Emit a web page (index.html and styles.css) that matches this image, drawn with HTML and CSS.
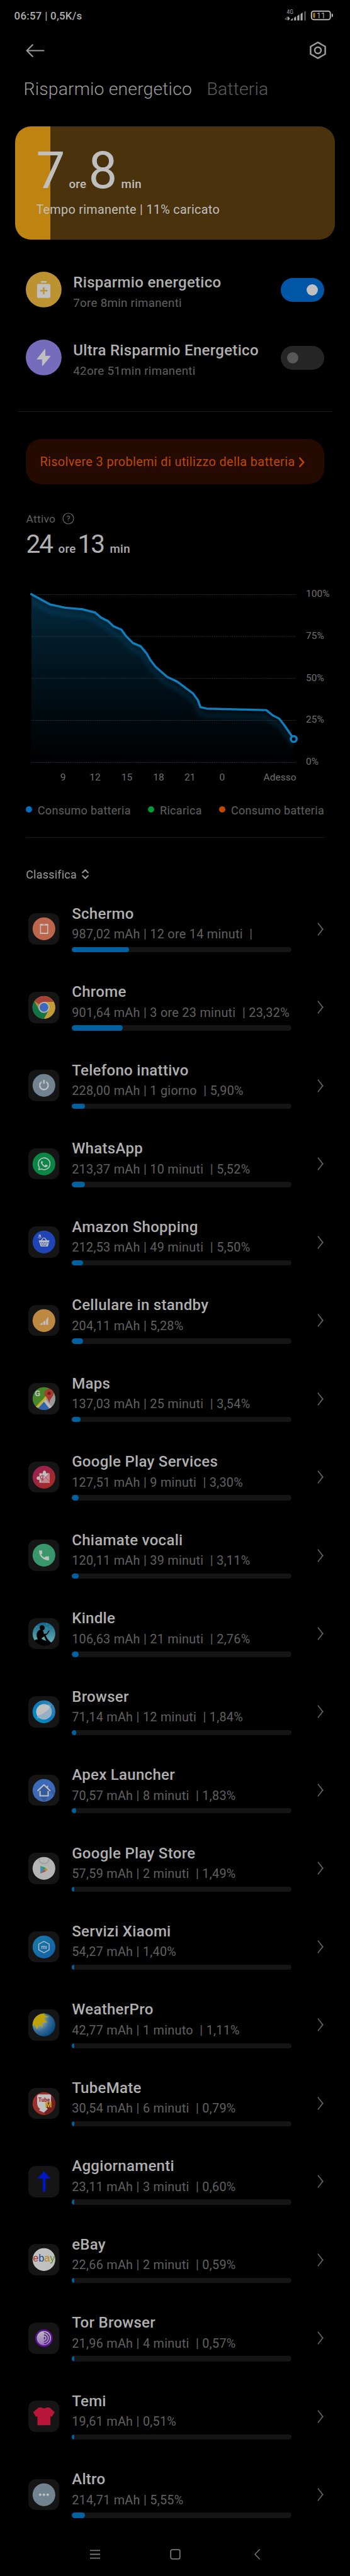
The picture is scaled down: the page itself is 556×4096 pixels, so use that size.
FILE: index.html
```html
<!DOCTYPE html>
<html lang="it">
<head>
  <meta charset="UTF-8">
  <title>Risparmio energetico</title>
  <link rel="stylesheet" href="styles.css">
</head>
<body>

<!-- Status bar -->
<div class="status">
  <span class="clock">06:57 | 0,5K/s</span>
  <svg class="status-icons" width="80" height="24" viewBox="0 0 155 46">
    <text x="7" y="15" font-size="16" fill="#a8a8a8">4G</text>
    <path d="M0 31l6-5v-4h1v13H6z" fill="#555"/>
    <path d="M9 24h3l4 5v3h-3v3h-4z" fill="#a8a8a8"/>
    <path d="M19 35l6-6v6zM30 35V28l5-4v11zM40 35V22l5-4v17zM50 35V16l5-4v23z" fill="#b0b0b0" stroke="#b0b0b0" stroke-linejoin="round"/>
    <path d="M60 35.500V9l6-3v29.500z" fill="#4a4a4a"/>
    <rect x="83" y="7" width="58" height="26" rx="7" fill="none" stroke="#b0b0b0" stroke-width="4"/>
    <rect x="88" y="12" width="6" height="16" rx="2" fill="#b07818"/>
    <text x="99" y="29" font-size="24" fill="#b0b0b0">11</text>
    <rect x="145" y="15" width="4" height="10" rx="2" fill="#b0b0b0"/>
  </svg>
</div>

<div class="appbar">
  <svg width="30" height="21" viewBox="0 0 30 21" fill="none" stroke="#9a9a9a" stroke-width="2.2" stroke-linecap="round" stroke-linejoin="round"><path d="M28.5 10.5H1.8M10.8 1.3L1.6 10.5L10.8 19.7"/></svg>
  <svg width="28" height="30" viewBox="0 0 28 30" fill="none" stroke="#9a9a9a" stroke-width="2.5" stroke-linejoin="round"><path d="M14 2.4L25.6 9V21L14 27.6L2.4 21V9z"/><circle cx="14" cy="15" r="5"/></svg>
</div>

<div class="tabs">
  <span class="tab active">Risparmio energetico</span>
  <span class="tab">Batteria</span>
</div>

<!-- Charge card -->
<div class="card">
  <div class="time"><span class="num">7</span><span class="unit">ore</span><span class="num">8</span><span class="unit">min</span></div>
  <div class="card-text">Tempo rimanente | 11% caricato</div>
</div>

<div class="modes">
  <div class="mode">
    <svg class="mode-icon" viewBox="0 0 110 110"><circle cx="55" cy="55" r="55" fill="#bd9230"/><rect x="46" y="29" width="18" height="5" rx="2" fill="#c0c0c0"/><rect x="34.5" y="38" width="41" height="43" rx="4" fill="#c0c0c0"/><path d="M55 48v21M44 58.500h22" stroke="#bd9230" stroke-width="5"/></svg>
    <div class="mode-text">
      <div class="mode-title">Risparmio energetico</div>
      <div class="mode-sub">7ore 8min rimanenti</div>
    </div>
    <div class="toggle on"><i></i></div>
  </div>
  <div class="mode">
    <svg class="mode-icon" viewBox="0 0 110 110"><circle cx="55" cy="55" r="55" fill="#766cbc"/><path d="M59 30L35 60H51V80L75 51H59z" fill="#c0c0c0" stroke="#c0c0c0" stroke-width="2" stroke-linejoin="round"/></svg>
    <div class="mode-text">
      <div class="mode-title">Ultra Risparmio Energetico</div>
      <div class="mode-sub">42ore 51min rimanenti</div>
    </div>
    <div class="toggle"><i></i></div>
  </div>
</div>

<div class="alert">
  <span>Risolvere 3 problemi di utilizzo della batteria</span>
  <svg width="9" height="16" viewBox="0 0 9 16" fill="none" stroke="#c04800" stroke-width="2.6" stroke-linecap="round" stroke-linejoin="round"><path d="M1.4 1.5L7.2 8L1.4 14.500"/></svg>
</div>

<!-- Battery usage -->
<div class="usage">
  <div class="usage-label"><span>Attivo</span>
    <svg width="19" height="19" viewBox="0 0 19 19"><circle cx="9.500" cy="9.500" r="8.500" fill="none" stroke="#6a6a6a" stroke-width="1.200"/><text x="9.500" y="14" text-anchor="middle" font-size="12.500" fill="#6a6a6a">?</text></svg>
  </div>
  <div class="time small"><span class="num">24</span><span class="unit">ore</span><span class="num">13</span><span class="unit">min</span></div>
</div>

<svg class="chart" width="556" height="326" viewBox="0 0 556 326">
  <defs>
    <linearGradient id="area" x1="0" y1="0" x2="0" y2="1">
      <stop offset="0" stop-color="#04293d"/>
      <stop offset=".5" stop-color="#00121b"/>
      <stop offset="1" stop-color="#000"/>
    </linearGradient>
    <filter id="soft" x="-10%" y="-10%" width="120%" height="120%"><feGaussianBlur stdDeviation="3"/></filter>
    <clipPath id="under"><path d="M50 15L79.800 31.200L103.900 36.400L131.200 38.800L151.100 44L161 52.400L171.600 57.600L180.500 65.900L192.900 71.200L200.700 81.900L211 92.400L223.400 97.600L232.600 108.700L239 119.500L247.200 130.300L265.600 146.300L281.500 153.900L306.700 172.700L314.500 183.500L318.400 194.300L328.300 196.700L423 199.100L433.300 207.500L443.600 212.700L452.100 223.800L466.300 245V282.600H50z"/></clipPath>
  </defs>
  <g clip-path="url(#under)">
    <rect x="50" y="15" width="417" height="268" fill="url(#area)"/>
    <path transform="translate(0 11)" filter="url(#soft)" opacity=".16" fill="none" stroke="#0e80bd" stroke-width="8" d="M49.600 14.800L79.800 31.200L103.900 36.400L131.200 38.800L151.100 44L161 52.400L171.600 57.600L180.500 65.900L192.900 71.200L200.700 81.900L211 92.400L223.400 97.600L232.600 108.700L239 119.500L247.200 130.300L265.600 146.300L281.500 153.900L306.700 172.700L314.500 183.500L318.400 194.300L328.300 196.700L423 199.100L433.300 207.500L443.600 212.700L452.100 223.800L466.300 245"/>
  </g>
  <path d="M50 15.500H470.500M50 82H470.500M50 148.800H470.500M50 215.500H470.500M50 282.500H470.500" stroke="#3a4044" stroke-width=".8" stroke-dasharray="1.700 1.200"/>
  <path fill="none" stroke="#0e80bd" stroke-width="3.400" stroke-linecap="round" stroke-linejoin="round" d="M49.600 14.800L79.800 31.200L103.900 36.400L131.200 38.800L151.100 44L161 52.400L171.600 57.600L180.500 65.900L192.900 71.200L200.700 81.900L211 92.400L223.400 97.600L232.600 108.700L239 119.500L247.200 130.300L265.600 146.300L281.500 153.900L306.700 172.700L314.500 183.500L318.400 194.300L328.300 196.700L423 199.100L433.300 207.500L443.600 212.700L452.100 223.800L463.100 239.800"/>
  <circle cx="466.600" cy="245" r="4.600" fill="#000" stroke="#0e80bd" stroke-width="3.500"/>
  <g class="axis">
    <text x="486" y="19">100%</text><text x="486" y="85.700">75%</text><text x="486" y="152.500">50%</text><text x="486" y="219.200">25%</text><text x="486" y="286">0%</text>
    <g text-anchor="middle"><text x="100" y="310.700">9</text><text x="151" y="310.700">12</text><text x="201.400" y="310.700">15</text><text x="252" y="310.700">18</text><text x="301.800" y="310.700">21</text><text x="352.800" y="310.700">0</text></g>
    <text x="470.500" y="310.700" text-anchor="end">Adesso</text>
  </g>
</svg>

<div class="legend">
  <span class="key blue">Consumo batteria</span>
  <span class="key green">Ricarica</span>
  <span class="key orange">Consumo batteria</span>
</div>

<div class="sort">Classifica
  <svg width="11" height="16" viewBox="0 0 11 16" fill="none" stroke="#9a9a9a" stroke-width="2" stroke-linecap="round" stroke-linejoin="round"><path d="M1.200 5.500L5.500 1.200L9.800 5.500M1.200 10.500L5.500 14.800L9.800 10.500"/></svg>
</div>

<!-- Apps -->
<ul class="apps">
  <li>
    <svg class="icon" viewBox="0 0 96 96"><circle cx="48" cy="48" r="35" fill="#bd664c"/><rect x="37.500" y="34.500" width="22" height="28" rx="1" fill="none" stroke="#c0c0c0" stroke-width="3"/><path d="M36 34h25v4H36zM36 60h25v4H36z" fill="#c0c0c0"/><path d="M45 35.500h7" stroke="#bd664c" stroke-width="2"/></svg>
    <div class="info"><div class="name">Schermo</div><div class="detail">987,02 mAh | 12 ore 14 minuti&nbsp; |</div><div class="bar"><i style="width:26%"></i></div></div>
  </li>
  <li>
    <svg class="icon" viewBox="0 0 96 96"><circle cx="48" cy="48" r="35" fill="#b08c2a"/><path d="M48 48L18.500 29A35 35 0 0 1 78 31H48z" fill="#a8403a"/><path d="M48 31H78A35 35 0 0 1 48 83L63 56z" fill="#c29c35"/><path d="M18.500 29A35 35 0 0 0 48 83L62 57L34 57z" fill="#137545"/><circle cx="48" cy="48" r="17" fill="#b8b8b8"/><circle cx="48" cy="48" r="13.500" fill="#3b69bd"/></svg>
    <div class="info"><div class="name">Chrome</div><div class="detail">901,64 mAh | 3 ore 23 minuti&nbsp; | 23,32%</div><div class="bar"><i style="width:23%"></i></div></div>
  </li>
  <li>
    <svg class="icon" viewBox="0 0 96 96"><circle cx="48" cy="48" r="35" fill="#70838f"/><path d="M41 37A13 13 0 1 0 55 37" fill="none" stroke="#c0c0c0" stroke-width="4.500"/><path d="M48 31v12" stroke="#c0c0c0" stroke-width="5"/></svg>
    <div class="info"><div class="name">Telefono inattivo</div><div class="detail">228,00 mAh | 1 giorno&nbsp; | 5,90%</div><div class="bar"><i style="width:6%"></i></div></div>
  </li>
  <li>
    <svg class="icon" viewBox="0 0 96 96"><circle cx="48" cy="48" r="35" fill="#0a8646"/><path d="M34 58A18 18 0 1 1 40.500 63.500L32 65.500z" fill="none" stroke="#c0c0c0" stroke-width="3" stroke-linejoin="round"/><path d="M42 38.500c-4 2-4 6-1 10.500c4 6 10 10 14 9c4-1 5-4 4.500-6l-6-2.500l-3 3.500c-3-1-6-4-7.500-7.500l2-2.500l-2-4.500z" fill="#c0c0c0"/></svg>
    <div class="info"><div class="name">WhatsApp</div><div class="detail">213,37 mAh | 10 minuti&nbsp; | 5,52%</div><div class="bar"><i style="width:6%"></i></div></div>
  </li>
  <li>
    <svg class="icon" viewBox="0 0 96 96"><circle cx="48" cy="48" r="35" fill="#2043b5"/><text x="31" y="33" font-size="15" font-weight="700" fill="#c0c0c0">a</text><path d="M29 34Q35 38 41 34" fill="none" stroke="#c0c0c0" stroke-width="1.500"/><path d="M39 44L47 34.500M49 34.500L57 44" fill="none" stroke="#c0c0c0" stroke-width="2.500"/><path d="M32 43h33l-5 19H38z" fill="#c0c0c0"/><path d="M37 49.500h25M39 54h20M41 58.500h16" stroke="#2043b5" stroke-width="2.600" stroke-dasharray="3 2.400"/></svg>
    <div class="info"><div class="name">Amazon Shopping</div><div class="detail">212,53 mAh | 49 minuti&nbsp; | 5,50%</div><div class="bar"><i style="width:5%"></i></div></div>
  </li>
  <li>
    <svg class="icon" viewBox="0 0 96 96"><circle cx="48" cy="48" r="35" fill="#bd883f"/><path d="M35 61v-1.500L44 53.500V61zM46 61V52L52.500 48V61zM54.500 61V46.500L61 36V61z" fill="#c0c0c0"/></svg>
    <div class="info"><div class="name">Cellulare in standby</div><div class="detail">204,11 mAh | 5,28%</div><div class="bar"><i style="width:5%"></i></div></div>
  </li>
  <li>
    <svg class="icon" viewBox="0 0 96 96"><clipPath id="round"><circle cx="48" cy="48" r="35"/></clipPath><g clip-path="url(#round)"><path d="M0 0h96v96H0z" fill="#46852a"/><path d="M48 45L96 10V96H60z" fill="#999"/><path d="M56 40L22 76H31L48 58L66 78H76L54 52z" fill="#b8b8b8"/><path d="M54 40L20 76H28L59 44z" fill="#c4b024"/><path d="M48 58L26 84H68z" fill="#3362b0"/></g><path d="M64 64Q63 53 55 43A14 14 0 1 1 73 43Q65 53 64 64z" fill="#a63a2e"/><circle cx="64" cy="32" r="5" fill="#6b1c17"/><text x="20" y="40" font-size="25" font-weight="700" fill="#c0c0c0">G</text></svg>
    <div class="info"><div class="name">Maps</div><div class="detail">137,03 mAh | 25 minuti&nbsp; | 3,54%</div><div class="bar"><i style="width:4%"></i></div></div>
  </li>
  <li>
    <svg class="icon" viewBox="0 0 96 96"><linearGradient id="gps" x1="0" x2="1" y1="0" y2="1"><stop offset=".1" stop-color="#982055"/><stop offset=".9" stop-color="#a52d22"/></linearGradient><circle cx="48" cy="48" r="35" fill="url(#gps)"/><path d="M34 36H45.500A5 5 0 1 1 53.500 36H65V66H34V54.500A5 5 0 1 1 34 47.500z" fill="#c0c0c0"/><path d="M65 36V66H36z" fill="#c08a90"/><path d="M40 36L65 61M65 36L36 66" stroke="#a83a48" stroke-width="1.200"/><text x="36" y="55" font-size="20" font-weight="500" fill="#a52745">g</text></svg>
    <div class="info"><div class="name">Google Play Services</div><div class="detail">127,51 mAh | 9 minuti&nbsp; | 3,30%</div><div class="bar"><i style="width:3%"></i></div></div>
  </li>
  <li>
    <svg class="icon" viewBox="0 0 96 96"><circle cx="48" cy="48" r="35" fill="#37966a"/><path d="M33 33.500h8.500l2 8l-4 4.500c3 5 6 7.500 9.500 9.500l4.500-3.500h10V64c-13 1.500-31-9-30.500-30.500z" fill="#c0c0c0"/></svg>
    <div class="info"><div class="name">Chiamate vocali</div><div class="detail">120,11 mAh | 39 minuti&nbsp; | 3,11%</div><div class="bar"><i style="width:3%"></i></div></div>
  </li>
  <li>
    <svg class="icon" viewBox="0 0 96 96"><linearGradient id="sky" x1="0" x2="0" y1="0" y2="1"><stop offset="0" stop-color="#12668c"/><stop offset="1" stop-color="#73b8b8"/></linearGradient><circle cx="48" cy="48" r="35" fill="url(#sky)"/><path d="M19 68C26 65 28 66 29 64C22 52 25 40 37 35C32 27 36 20 43 22C50 22 52 31 49 35L44 38C47 42 48 46 48 49L57 47L60 41L65 36L64 42L58 50L53 53C57 61 64 71 72 76A35 35 0 0 1 19 68z" fill="#000"/><path d="M40 62L49 56L55 70L44 66z" fill="#5ba5ad"/><g fill="#9cc"><circle cx="26" cy="26" r="1"/><circle cx="56" cy="30" r="1"/><circle cx="57" cy="18" r="1"/><circle cx="67" cy="25" r=".8"/><circle cx="77" cy="35" r=".8"/></g></svg>
    <div class="info"><div class="name">Kindle</div><div class="detail">106,63 mAh | 21 minuti&nbsp; | 2,76%</div><div class="bar"><i style="width:3%"></i></div></div>
  </li>
  <li>
    <svg class="icon" viewBox="0 0 96 96"><linearGradient id="web" x1="0" x2="1" y1="1" y2="0"><stop offset="0" stop-color="#0098c0"/><stop offset=".5" stop-color="#087abc"/><stop offset="1" stop-color="#4c88b8"/></linearGradient><circle cx="48" cy="48" r="35" fill="url(#web)"/><path d="M26 64L60 26Q70 24 70 29Q68 38 54 51Q34 70 27 69z" fill="#6aa5c8" opacity=".7"/><circle cx="48" cy="48" r="24" fill="#c0c0c0"/><path d="M28 61Q55 52 68 34A24 24 0 0 1 28 61z" fill="#96afc5"/></svg>
    <div class="info"><div class="name">Browser</div><div class="detail">71,14 mAh | 12 minuti&nbsp; | 1,84%</div><div class="bar"><i style="width:2%"></i></div></div>
  </li>
  <li>
    <svg class="icon" viewBox="0 0 96 96"><circle cx="48" cy="48" r="35" fill="#3d6ab8"/><path d="M69 50L61 66L49 83L34 66V52L48 32L60 34L82 55L78 65z" fill="#345a9c"/><path d="M28 50L48 31L68 50M59 40V34M36 50V65H61V50" fill="none" stroke="#c0c0c0" stroke-width="4" stroke-linejoin="round"/></svg>
    <div class="info"><div class="name">Apex Launcher</div><div class="detail">70,57 mAh | 8 minuti&nbsp; | 1,83%</div><div class="bar"><i style="width:2%"></i></div></div>
  </li>
  <li>
    <svg class="icon" viewBox="0 0 96 96"><circle cx="48" cy="48" r="35" fill="#b5b5b5"/><path d="M33 18A15.500 15.500 0 0 0 64 18" fill="none" stroke="#999" stroke-width="2.600"/><path d="M37 40V64L49 52z" fill="#3c8cb5"/><path d="M37 40L54 47L49 52z" fill="#1f9a55"/><path d="M37 64L54 57L49 52z" fill="#b04848"/><path d="M53 47L60 52L53 57L49 52z" fill="#bd8a30"/></svg>
    <div class="info"><div class="name">Google Play Store</div><div class="detail">57,59 mAh | 2 minuti&nbsp; | 1,49%</div><div class="bar"><i style="width:1%"></i></div></div>
  </li>
  <li>
    <svg class="icon" viewBox="0 0 96 96"><linearGradient id="mi" x1="0" x2="1" y1="0" y2="1"><stop offset="0" stop-color="#1a7aa8"/><stop offset="1" stop-color="#1260a5"/></linearGradient><circle cx="48" cy="48" r="35" fill="url(#mi)"/><path d="M48 31L64 39V57L48 66L32 57V39z" fill="none" stroke="#b8c4cc" stroke-width="2.600"/><text x="48" y="53.500" text-anchor="middle" font-size="16" font-weight="500" fill="#b8c4cc">mı</text></svg>
    <div class="info"><div class="name">Servizi Xiaomi</div><div class="detail">54,27 mAh | 1,40%</div><div class="bar"><i style="width:1%"></i></div></div>
  </li>
  <li>
    <svg class="icon" viewBox="0 0 96 96"><radialGradient id="meteo" cx=".25" cy=".3" r=".8"><stop offset=".2" stop-color="#9aaab5"/><stop offset=".6" stop-color="#3a6c98"/><stop offset="1" stop-color="#044a80"/></radialGradient><circle cx="48" cy="48" r="35" fill="url(#meteo)"/><path d="M13 48A35 35 0 0 1 52 13L48 17L64 23L48 27L59 41L43 40L44 57L34 46L26 62L20 48L13 51z" fill="#bda308"/></svg>
    <div class="info"><div class="name">WeatherPro</div><div class="detail">42,77 mAh | 1 minuto&nbsp; | 1,11%</div><div class="bar"><i style="width:1%"></i></div></div>
  </li>
  <li>
    <svg class="icon" viewBox="0 0 96 96"><circle cx="48" cy="48" r="35" fill="#9c2e2c"/><path d="M71 26L80 34A35 35 0 0 1 54 82L45 74z" fill="#742020"/><path d="M27 25Q28 20 33 20H66Q70 20 70 26V44H54V60L60 64L48 76L32 68L37 65Q27 60 27 44z" fill="#c0c0c0"/><text x="31" y="42" font-size="19" font-weight="900" textLength="35" lengthAdjust="spacingAndGlyphs" fill="#9c2e2c">Tube</text><text x="52" y="60" font-size="23" font-weight="900" fill="#c4a230">M</text></svg>
    <div class="info"><div class="name">TubeMate</div><div class="detail">30,54 mAh | 6 minuti&nbsp; | 0,79%</div><div class="bar"><i style="width:1%"></i></div></div>
  </li>
  <li>
    <svg class="icon" viewBox="0 0 96 96"><path d="M48 16L69 39H53V79H44V39H27z" fill="#0018bd"/></svg>
    <div class="info"><div class="name">Aggiornamenti</div><div class="detail">23,11 mAh | 3 minuti&nbsp; | 0,60%</div><div class="bar"><i style="width:1%"></i></div></div>
  </li>
  <li>
    <svg class="icon" viewBox="0 0 96 96"><circle cx="48" cy="48" r="35" fill="#c0c0c0"/><text class="ebay" x="14" y="54" font-size="33" textLength="68" lengthAdjust="spacingAndGlyphs"><tspan fill="#a82e32">e</tspan><tspan fill="#0b4a96">b</tspan><tspan fill="#bd8710">a</tspan><tspan fill="#658a18">y</tspan></text></svg>
    <div class="info"><div class="name">eBay</div><div class="detail">22,66 mAh | 2 minuti&nbsp; | 0,59%</div><div class="bar"><i style="width:1%"></i></div></div>
  </li>
  <li>
    <svg class="icon" viewBox="0 0 96 96"><linearGradient id="tor" x1="0" x2="0" y1="0" y2="1"><stop offset="0" stop-color="#bbb"/><stop offset="1" stop-color="#9a72c0"/></linearGradient><circle cx="48" cy="48" r="27" fill="#5a1290"/><circle cx="48" cy="48" r="22" fill="url(#tor)"/><g fill="none" stroke="#4a1a78" stroke-width="3"><path d="M48 31A17 17 0 0 1 48 65M48 38A10 10 0 0 1 48 58"/></g><path d="M48 44A4 4 0 0 1 48 52z" fill="#4a1a78"/></svg>
    <div class="info"><div class="name">Tor Browser</div><div class="detail">21,96 mAh | 4 minuti&nbsp; | 0,57%</div><div class="bar"><i style="width:1%"></i></div></div>
  </li>
  <li>
    <svg class="icon" viewBox="0 0 96 96"><path d="M15 36L32 21.500H40Q48 27 57 21.500H65L81 36L72 51L68 48V73Q68 76 65 76H31Q28 76 28 73V49L23 50z" fill="#b81638"/></svg>
    <div class="info"><div class="name">Temi</div><div class="detail">19,61 mAh | 0,51%</div><div class="bar"><i style="width:1%"></i></div></div>
  </li>
  <li>
    <svg class="icon" viewBox="0 0 96 96"><circle cx="48" cy="48" r="35" fill="#70838f"/><g fill="#c0c0c0"><circle cx="36.500" cy="48" r="4"/><circle cx="48" cy="48" r="4"/><circle cx="59.500" cy="48" r="4"/></g></svg>
    <div class="info"><div class="name">Altro</div><div class="detail">214,71 mAh | 5,55%</div><div class="bar"><i style="width:6%"></i></div></div>
  </li>
</ul>

<!-- System navigation -->
<div class="nav">
  <svg width="16" height="17" viewBox="0 0 16 17" stroke="#777" stroke-width="1.800"><path d="M0 2.300H16M0 8.500H16M0 14.700H16"/></svg>
  <svg width="17" height="17" viewBox="0 0 17 17"><rect x="1.200" y="1.200" width="14.600" height="14.600" rx="2.500" fill="none" stroke="#777" stroke-width="1.800"/></svg>
  <svg class="nav-back" width="9" height="17" viewBox="0 0 9 17" fill="none" stroke="#777" stroke-width="1.500" stroke-linecap="round"><path d="M8.300 1L1 8.500L8.300 16"/></svg>
</div>

</body>
</html>
```
FILE: styles.css
```css
* {
  box-sizing: border-box;
}
body {
  margin: 0;
  width: 556px;
  height: 4096px;
  overflow: hidden;
  background: #000;
  color: #b0b0b0;
  font-family: Roboto, sans-serif;
  letter-spacing: .019em;
}
svg {
  display: block;
  flex: none;
  letter-spacing: 0;
}
.status {
  display: flex;
  justify-content: space-between;
  height: 48px;
  padding: 12.3px 24px 0 22.6px;
}
.clock {
  font-size: 16.8px;
  line-height: 26px;
  font-weight: 500;
  letter-spacing: .3px;
}
.status-icons {
  margin-top: 2px;
}
.appbar {
  display: flex;
  justify-content: space-between;
  align-items: center;
  height: 64px;
  padding: 0 36.6px 0 41px;
}
.tabs {
  display: flex;
  gap: 23.5px;
  height: 89.2px;
  padding: 10px 0 0 37.5px;
  font-size: 28.4px;
  line-height: 40px;
  font-weight: 300;
  letter-spacing: .15px;
}
.tab {
  color: #5c5c5c;
}
.tab.active {
  color: #9e9e9e;
}
.card {
  height: 180px;
  margin: 0 24px;
  padding: 24px 0 0 33.4px;
  border-radius: 25px;
  background: linear-gradient(to right, #bf830f 55.8px, #4a330c 55.8px);
  color: #bfbfbf;
}
.time {
  display: flex;
  align-items: baseline;
  height: 92px;
  line-height: 92px;
}
.time .num {
  font-size: 81.5px;
  letter-spacing: 0;
}
.time .unit {
  margin: 0 3.2px 0 6.2px;
  font-size: 18.7px;
  line-height: 1;
  font-weight: 500;
}
.card-text {
  font-size: 19.8px;
  line-height: 26px;
  margin-top: 3.5px;
}
.modes {
  margin: 25.6px 41px 0;
}
.mode {
  display: flex;
  align-items: center;
  height: 108px;
}
.mode-icon {
  width: 56.8px;
  height: 56.8px;
}
.mode-text {
  flex: 1;
  margin-left: 18.5px;
  padding-top: 7px;
}
.mode-title {
  font-size: 24px;
  line-height: 30px;
  font-weight: 500;
  white-space: nowrap;
}
.mode-sub {
  margin-top: 5.5px;
  font-size: 18.7px;
  line-height: 26px;
  color: #606060;
}
.toggle {
  width: 69.2px;
  height: 38px;
  padding: 9.8px;
  border-radius: 19px;
  background: #262626;
}
.toggle i {
  display: block;
  width: 18.5px;
  height: 18.5px;
  border-radius: 50%;
  background: #585858;
}
.toggle.on {
  background: #0057a8;
}
.toggle.on i {
  margin-left: auto;
  background: #c0c0c0;
}
.alert {
  display: flex;
  align-items: center;
  gap: 6.5px;
  height: 72px;
  margin: 75.2px 41px 0;
  padding: 2px 0 0 22.4px;
  border-radius: 25px;
  background: #240a00;
  color: #c04800;
  font-size: 19.8px;
  letter-spacing: .4px;
  white-space: nowrap;
  position: relative;
}
/* hairline over the alert, wider than the content column */
.alert::before {
  content: "";
  position: absolute;
  left: -13px;
  right: -13px;
  top: -44px;
  height: 1px;
  background: #191919;
}
.usage {
  padding: 43px 0 0 41.5px;
}
.usage-label {
  display: flex;
  align-items: center;
  gap: 11px;
  height: 24px;
  font-size: 17.4px;
  color: #606060;
}
.time.small {
  margin-top: 2.8px;
  height: 50px;
  line-height: 50px;
}
.time.small .num {
  font-size: 40.5px;
  letter-spacing: -2px;
}
.time.small .unit {
  margin: 0 3px 0 9.5px;
}
.chart {
  margin-top: 40.2px;
}
.axis {
  font-size: 15.5px;
  fill: #707070;
}
.legend {
  display: flex;
  justify-content: space-between;
  margin: 18px 41px 0;
  height: 58.5px;
  border-bottom: 1px solid #191919;
  font-size: 18px;
  line-height: 30px;
  color: #606060;
}
.key::before {
  content: "";
  display: inline-block;
  width: 10.3px;
  height: 10.3px;
  margin-right: 8.5px;
  border-radius: 50%;
  background: #0070c0;
  vertical-align: 2.5px;
}
.key.green::before {
  background: #009a38;
}
.key.orange::before {
  background: #c04800;
}
.sort {
  display: flex;
  align-items: center;
  gap: 8px;
  height: 82.6px;
  padding: 33.4px 0 0 41.2px;
  font-size: 17.8px;
  color: #9a9a9a;
}
.apps {
  list-style: none;
  margin: 0;
  padding: 0 41px 0 44.7px;
}
.apps li {
  display: flex;
  align-items: center;
  height: 124.48px;
}
.apps li::after {
  content: "";
  width: 13px;
  height: 13px;
  margin: 0 2.5px 0 auto;
  border: solid #606060;
  border-width: 2px 2px 0 0;
  transform: scaleX(.78) rotate(45deg);
}
.icon {
  width: 49.6px;
  height: 49.6px;
  border-radius: 12px;
  background: #151515;
}
.ebay {
  font-family: "Liberation Sans", sans-serif;
}
.info {
  width: 349.3px;
  margin-left: 19.9px;
  padding-bottom: 2.4px;
}
.name {
  font-size: 24px;
  line-height: 30px;
  font-weight: 500;
}
.detail {
  margin-top: 5.5px;
  font-size: 19.8px;
  line-height: 26px;
  color: #606060;
  white-space: nowrap;
}
.bar {
  height: 8.3px;
  margin-top: 6.6px;
  border-radius: 5px;
  background: #151515;
  overflow: hidden;
}
.bar i {
  display: block;
  height: 100%;
  border-radius: 5px;
  background: #0061a0;
}
.nav {
  display: flex;
  align-items: center;
  gap: 111.5px;
  padding-left: 142.5px;
  height: 66px;
}
.nav-back {
  margin-left: 5px;
}
```
